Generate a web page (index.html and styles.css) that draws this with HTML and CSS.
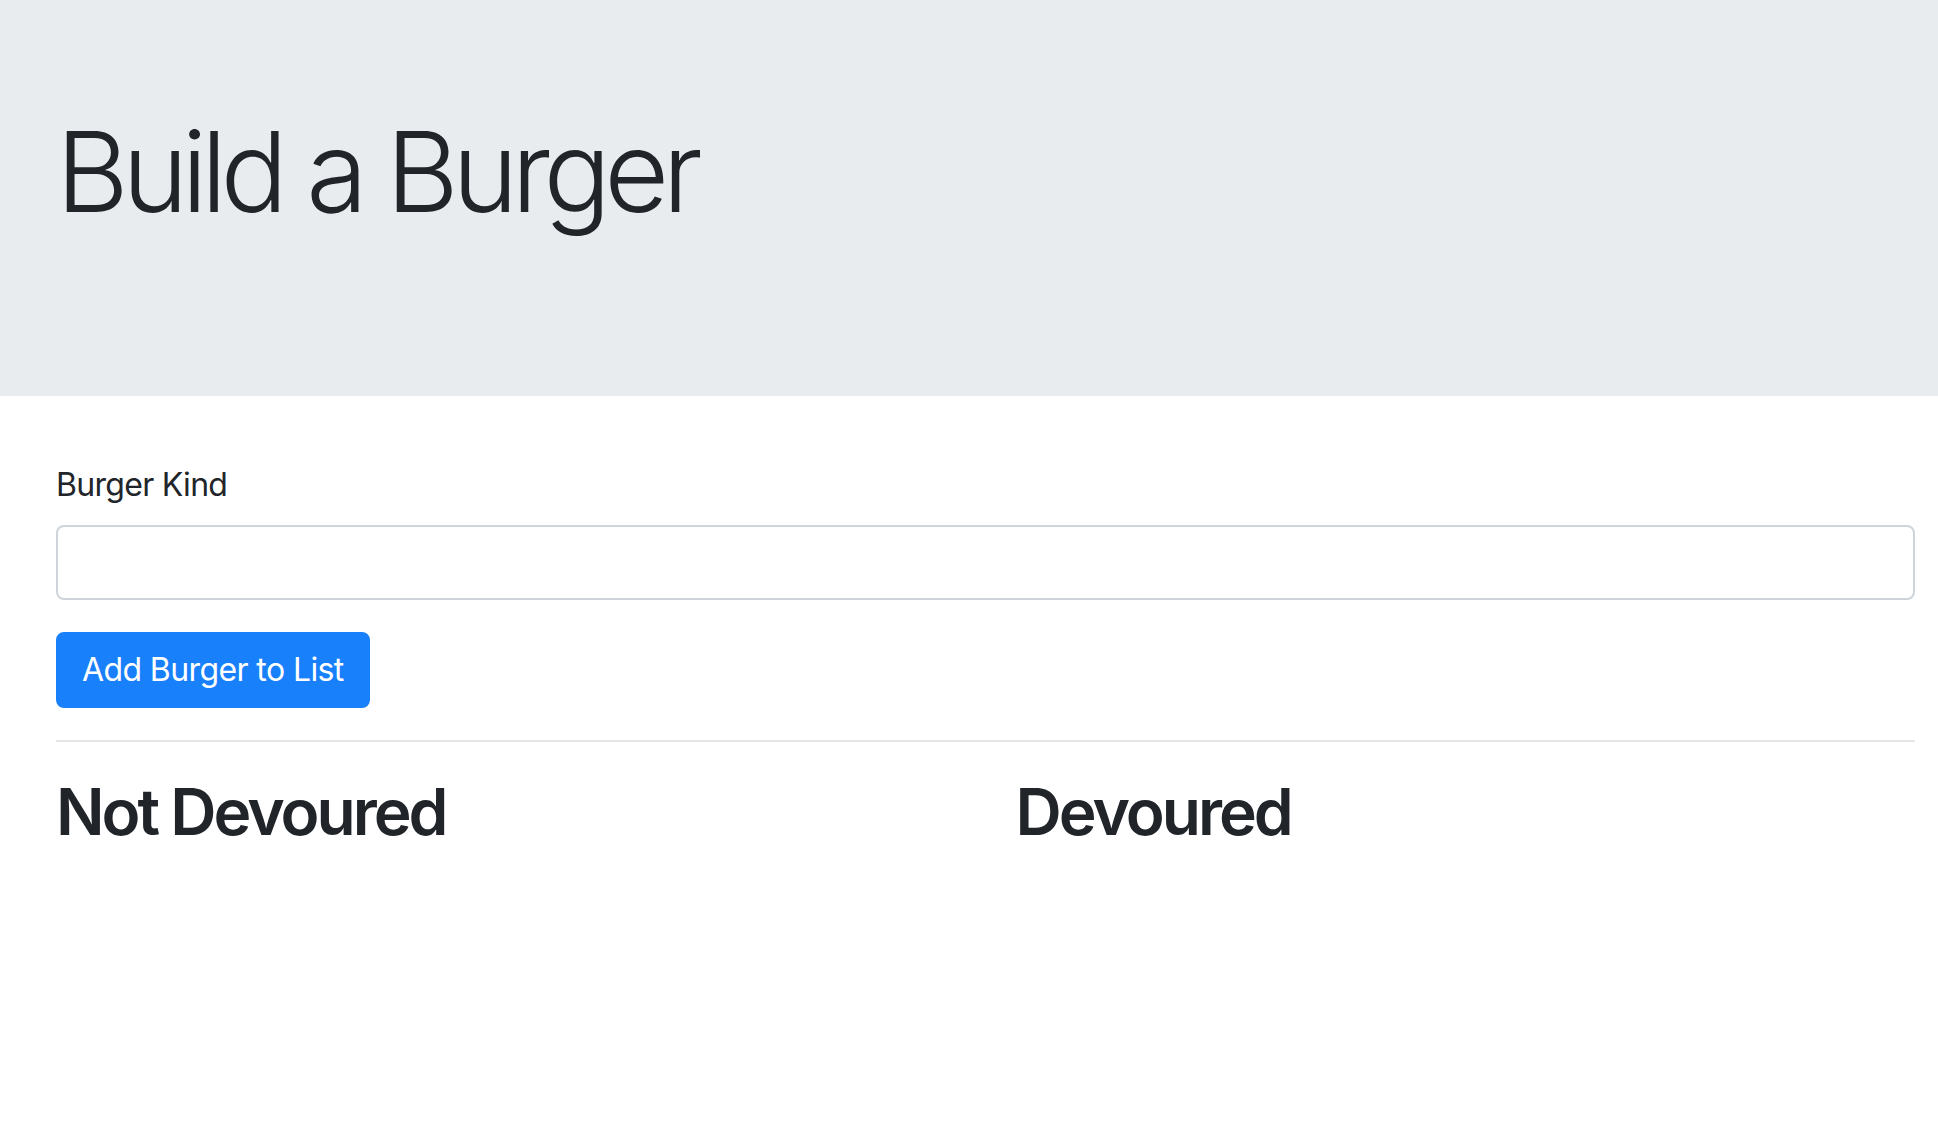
FILE: index.html
```html
<!DOCTYPE html>
<html lang="en">
<head>
<meta charset="utf-8">
<title>Build a Burger</title>
<link rel="stylesheet" href="styles.css">
</head>
<body>
<header class="jumbotron">
  <div class="container">
    <h1 class="display">Build a Burger</h1>
  </div>
</header>
<main class="container">
  <form class="burger-form">
    <div class="form-group">
      <label class="form-label" for="burger">Burger Kind</label>
      <input class="form-control" type="text" id="burger">
    </div>
    <button class="btn-primary" type="submit">Add Burger to List</button>
  </form>
  <hr class="divider">
  <div class="columns">
    <section class="col">
      <h2 class="col-title">Not Devoured</h2>
    </section>
    <section class="col">
      <h2 class="col-title">Devoured</h2>
    </section>
  </div>
</main>
</body>
</html>
```
FILE: styles.css
```css
* { box-sizing: border-box; }
html, body {
  margin: 0;
  padding: 0;
  background: #fff;
}
body {
  font-family: Inter, "Noto Sans", "Liberation Sans", sans-serif;
  color: #212529;
  font-size: 32px;
  line-height: 1.5;
}
.container {
  padding-left: 56px;
  padding-right: 23px;
}
.jumbotron {
  background: #e9ecef;
  padding: 104px 0 158px;
  margin-bottom: 65px;
}
.display {
  margin: 0;
  font-size: 112px;
  font-weight: 300;
  line-height: 1.2;
  letter-spacing: -6.6px;
}
.burger-form {
  display: flex;
  flex-direction: column;
  align-items: flex-start;
}
.form-group {
  align-self: stretch;
  display: flex;
  flex-direction: column;
  margin-bottom: 32px;
}
.form-label {
  font-size: 32px;
  line-height: 48px;
  margin-bottom: 16px;
  letter-spacing: -0.7px;
}
.form-control {
  height: 75px;
  border: 2px solid #ced4da;
  border-radius: 8px;
  padding: 12px 24px;
  font: inherit;
  background: #fff;
  outline: none;
}
.btn-primary {
  font: inherit;
  font-size: 32px;
  line-height: 48px;
  letter-spacing: -0.6px;
  padding: 12px 24px;
  border: 2px solid #1980fc;
  background: #1980fc;
  color: #fff;
  border-radius: 8px;
  cursor: pointer;
}
.divider {
  margin: 32px 0;
  border: 0;
  border-top: 2px solid #e6e6e6;
  height: 0;
}
.columns {
  display: grid;
  grid-template-columns: 1fr 1fr;
  column-gap: 60px;
}
.col-title {
  margin: 0 0 16px;
  font-size: 64px;
  font-weight: 600;
  line-height: 1.2;
  letter-spacing: -3px;
}
```
